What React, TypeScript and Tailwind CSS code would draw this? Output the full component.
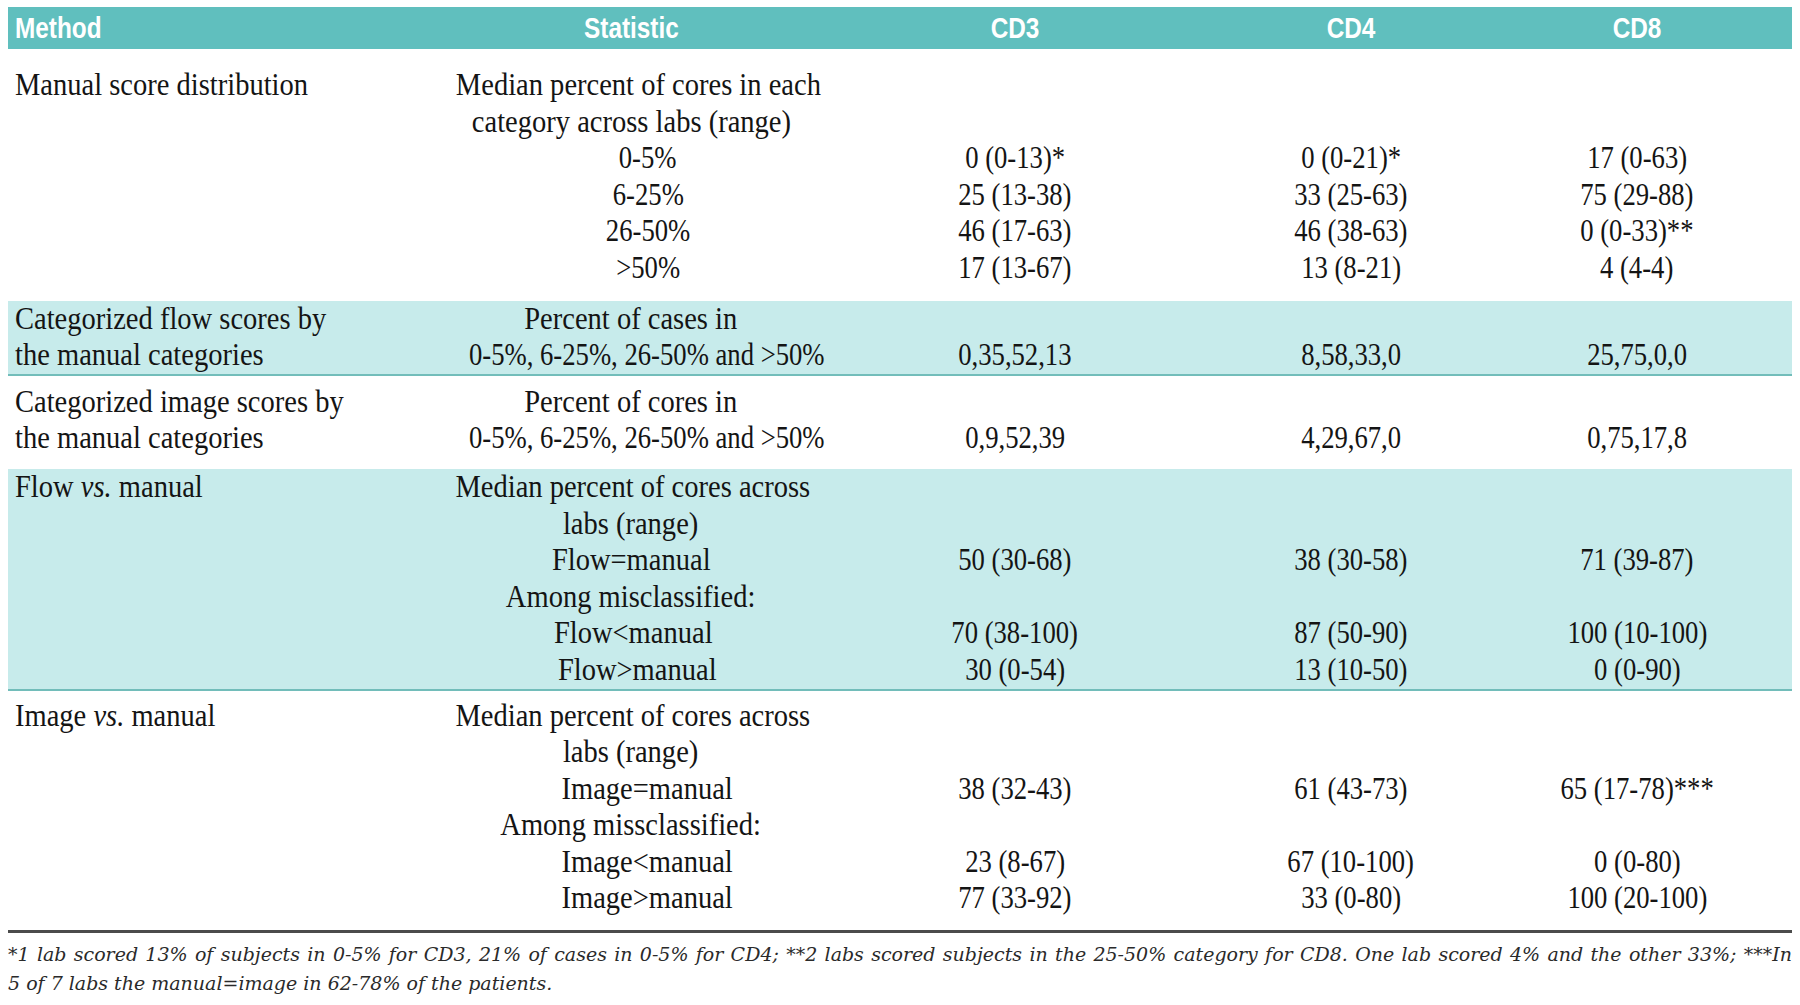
import React from 'react';

type Ln = React.ReactNode | null;
type StatLn = [React.ReactNode, string?, boolean?];

interface TableRow {
  teal: boolean;
  pad: string;
  method: Ln[];
  stat: StatLn[];
  cd3: Ln[];
  cd4: Ln[];
  cd8: Ln[];
}

const Vs = () => <em>vs.</em>;

const rows: TableRow[] = [
  {
    teal: false,
    pad: 'pt-[18px] pb-[14px]',
    method: ['Manual score distribution'],
    stat: [
      ['Median percent of cores in each'],
      ['category across labs (range)'],
      ['0-5%', 'pl-[34px]', true],
      ['6-25%', 'pl-[34px]', true],
      ['26-50%', 'pl-[34px]', true],
      ['>50%', 'pl-[34px]', true],
    ],
    cd3: [null, null, '0 (0-13)*', '25 (13-38)', '46 (17-63)', '17 (13-67)'],
    cd4: [null, null, '0 (0-21)*', '33 (25-63)', '46 (38-63)', '13 (8-21)'],
    cd8: [null, null, '17 (0-63)', '75 (29-88)', '0 (0-33)**', '4 (4-4)'],
  },
  {
    teal: true,
    pad: 'pt-0 pb-0',
    method: ['Categorized flow scores by', 'the manual categories'],
    stat: [['Percent of cases in'], ['0-5%, 6-25%, 26-50% and >50%', '', true]],
    cd3: [null, '0,35,52,13'],
    cd4: [null, '8,58,33,0'],
    cd8: [null, '25,75,0,0'],
  },
  {
    teal: false,
    pad: 'pt-[8px] pb-[12px]',
    method: ['Categorized image scores by', 'the manual categories'],
    stat: [['Percent of cores in'], ['0-5%, 6-25%, 26-50% and >50%', '', true]],
    cd3: [null, '0,9,52,39'],
    cd4: [null, '4,29,67,0'],
    cd8: [null, '0,75,17,8'],
  },
  {
    teal: true,
    pad: 'pt-0 pb-0',
    method: [
      <>
        Flow <Vs /> manual
      </>,
    ],
    stat: [
      ['Median percent of cores across'],
      ['labs (range)'],
      ['Flow=manual'],
      ['Among misclassified:'],
      ['Flow<manual', 'pl-[4px]'],
      ['Flow>manual', 'pl-[12px]'],
    ],
    cd3: [null, null, '50 (30-68)', null, '70 (38-100)', '30 (0-54)'],
    cd4: [null, null, '38 (30-58)', null, '87 (50-90)', '13 (10-50)'],
    cd8: [null, null, '71 (39-87)', null, '100 (10-100)', '0 (0-90)'],
  },
  {
    teal: false,
    pad: 'pt-[7px] pb-[13px]',
    method: [
      <>
        Image <Vs /> manual
      </>,
    ],
    stat: [
      ['Median percent of cores across'],
      ['labs (range)'],
      ['Image=manual', 'pl-[32px]'],
      ['Among missclassified:'],
      ['Image<manual', 'pl-[32px]'],
      ['Image>manual', 'pl-[32px]'],
    ],
    cd3: [null, null, '38 (32-43)', null, '23 (8-67)', '77 (33-92)'],
    cd4: [null, null, '61 (43-73)', null, '67 (10-100)', '33 (0-80)'],
    cd8: [null, null, '65 (17-78)***', null, '0 (0-80)', '100 (20-100)'],
  },
];

function Line({ text, left, shift, num }: { text: Ln; left?: boolean; shift?: string; num?: boolean }) {
  if (text === null || text === undefined) return <div className="h-[36.6px]" />;
  return (
    <div
      className={`h-[36.6px] whitespace-nowrap leading-[36.6px] ${left ? 'text-left' : 'text-center'} ${shift ?? ''}`}
    >
      <span
        className={`inline-block ${num ? 'scale-x-[0.86]' : 'scale-x-[0.92]'} ${left ? 'origin-left' : 'origin-center'}`}
      >
        {text}
      </span>
    </div>
  );
}

const cols = 'grid grid-cols-[432px_382px_386px_286px_286px]';

export default function App() {
  return (
    <div className="min-h-[1005px] w-[1800px] bg-white px-[8px] pt-[7px] font-['Liberation_Serif','Times_New_Roman',serif] text-[31px] text-[#141414]">
      {/* header */}
      <div
        className={`${cols} h-[42px] items-center bg-[#60bfbe] font-['Liberation_Sans',Arial,sans-serif] text-[29px] font-bold text-white`}
      >
        {['Method', 'Statistic', 'CD3', 'CD4', 'CD8'].map((h, i) => (
          <div key={h} className={i === 0 ? 'pl-[7px] text-left' : 'text-center'}>
            <span className={`inline-block scale-x-[0.84] ${i === 0 ? 'origin-left' : 'origin-center'}`}>{h}</span>
          </div>
        ))}
      </div>

      {rows.map((r, idx) => (
        <div
          key={idx}
          className={`${cols} ${r.pad} ${r.teal ? 'border-b-2 border-[#72bdba] bg-[#c7ebeb]' : ''} ${
            idx === rows.length - 1 ? 'border-b-[3px] border-[#4b4b4b]' : ''
          }`}
        >
          <div className="pl-[7px]">
            {r.method.map((m, i) => (
              <Line key={i} text={m} left />
            ))}
          </div>
          <div>
            {r.stat.map(([t, s, n], i) => (
              <Line key={i} text={t} shift={s} num={n} />
            ))}
          </div>
          {[r.cd3, r.cd4, r.cd8].map((c, ci) => (
            <div key={ci}>
              {c.map((v, i) => (
                <Line key={i} text={v} num />
              ))}
            </div>
          ))}
        </div>
      ))}

      {/* footnote */}
      <div className="pt-[7px] font-['DejaVu_Serif',serif] text-[19px] italic leading-[29px] text-[#2a2a2a]">
        <div className="whitespace-nowrap text-justify [text-align-last:justify]">
          *1 lab scored 13% of subjects in 0-5% for CD3, 21% of cases in 0-5% for CD4; **2 labs scored subjects in the
          25-50% category for CD8. One lab scored 4% and the other 33%; ***In
        </div>
        <div>5 of 7 labs the manual=image in 62-78% of the patients.</div>
      </div>
    </div>
  );
}
